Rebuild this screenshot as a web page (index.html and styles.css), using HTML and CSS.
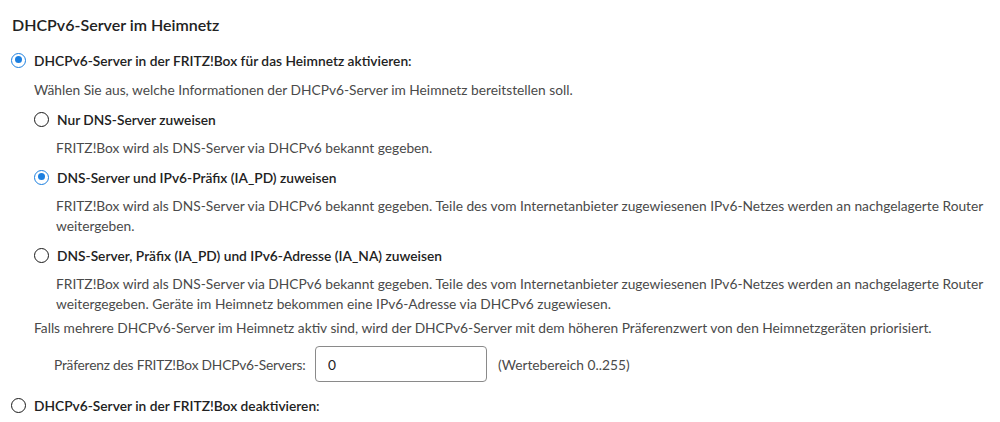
FILE: index.html
```html
<!DOCTYPE html>
<html lang="de">
<head>
    <meta charset="UTF-8">
    <title>DHCPv6-Server im Heimnetz</title>
    <link rel="stylesheet" href="styles.css">
</head>
<body>
    <div class="section">
        <h2>DHCPv6-Server im Heimnetz</h2>

        <label class="option">
            <span class="radio checked"></span>
            <span class="option-label">DHCPv6-Server in der FRITZ!Box für das Heimnetz aktivieren:</span>
        </label>

        <div class="indent">
            <p class="hint">Wählen Sie aus, welche Informationen der DHCPv6-Server im Heimnetz bereitstellen soll.</p>

            <label class="option">
                <span class="radio"></span>
                <span class="option-label">Nur DNS-Server zuweisen</span>
            </label>
            <p class="desc">FRITZ!Box wird als DNS-Server via DHCPv6 bekannt gegeben.</p>

            <label class="option">
                <span class="radio checked"></span>
                <span class="option-label">DNS-Server und IPv6-Präfix (IA_PD) zuweisen</span>
            </label>
            <p class="desc">FRITZ!Box wird als DNS-Server via DHCPv6 bekannt gegeben. Teile des vom Internetanbieter zugewiesenen IPv6-Netzes werden an nachgelagerte Router weitergeben.</p>

            <label class="option">
                <span class="radio"></span>
                <span class="option-label">DNS-Server, Präfix (IA_PD) und IPv6-Adresse (IA_NA) zuweisen</span>
            </label>
            <p class="desc">FRITZ!Box wird als DNS-Server via DHCPv6 bekannt gegeben. Teile des vom Internetanbieter zugewiesenen IPv6-Netzes werden an nachgelagerte Router weitergegeben. Geräte im Heimnetz bekommen eine IPv6-Adresse via DHCPv6 zugewiesen.</p>

            <p class="hint note">Falls mehrere DHCPv6-Server im Heimnetz aktiv sind, wird der DHCPv6-Server mit dem höheren Präferenzwert von den Heimnetzgeräten priorisiert.</p>

            <div class="field">
                <span class="field-label">Präferenz des FRITZ!Box DHCPv6-Servers:</span>
                <input type="text" value="0">
                <span class="field-note">(Wertebereich 0..255)</span>
            </div>
        </div>

        <label class="option last">
            <span class="radio"></span>
            <span class="option-label">DHCPv6-Server in der FRITZ!Box deaktivieren:</span>
        </label>
    </div>
</body>
</html>
```

FILE: styles.css
```css
body {
    margin: 0;
    background: #ffffff;
    font-family: Lato, "Open Sans", sans-serif;
    font-size: 13.75px;
    color: #4a4a4a;
}
.section {
    padding: 14px 0 0 11px;
}
h2 {
    margin: 0 0 13px 1px;
    font-size: 16px;
    font-weight: 600;
    color: #222;
    line-height: 22px;
}
.option {
    display: flex;
    align-items: center;
    gap: 8px;
    height: 22px;
    color: #222;
    font-weight: 600;
}
.radio {
    box-sizing: border-box;
    width: 15px;
    height: 15px;
    border: 1.5px solid #1a1a1a;
    border-radius: 50%;
    flex: none;
    position: relative;
}
.radio.checked {
    border-color: #1b7fe0;
}
.radio.checked::after {
    content: "";
    position: absolute;
    left: 2.5px;
    top: 2.5px;
    width: 7px;
    height: 7px;
    border-radius: 50%;
    background: #1b7fe0;
}
.indent {
    padding-left: 23px;
}
.hint {
    margin: 9px 0 0 0;
    line-height: 20px;
}
.hint.note {
    margin-top: 4px;
}
.indent .option {
    margin-top: 8px;
}
.desc {
    margin: 8px 0 0 22px;
    line-height: 20px;
}
.field {
    display: flex;
    align-items: center;
    margin: 8px 0 0 20px;
}
.field-label {
    flex: none;
    width: 261px;
    white-space: nowrap;
    letter-spacing: -0.2px;
}
.field input {
    box-sizing: border-box;
    width: 172px;
    height: 36px;
    border: 1px solid #8a8a8a;
    border-radius: 4px;
    padding: 0 12px;
    font: inherit;
    color: #222;
}
.field-note {
    margin-left: 11px;
}
.option.last {
    margin-top: 12px;
}
```
